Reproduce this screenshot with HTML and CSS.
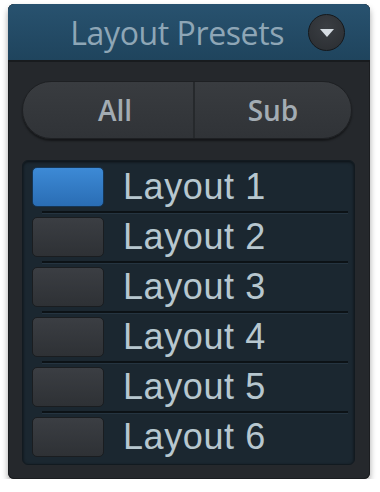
FILE: index.html
```html
<!DOCTYPE html>
<html lang="en">
    <head>
        <meta charset="UTF-8">
        <meta name="viewport" content="width=device-width, initial-scale=1.0">
        <title>Layout Presets</title>
        <link rel="stylesheet" href="styles.css">
    </head>
    <body>
        <div class="panel">
            <div class="header">
                <h1>Layout Presets</h1>
                <button class="drop">
                    <svg width="16" height="10" viewBox="0 0 16 10"><path d="M1 1 L15 1 L8 9 Z" fill="#d6dde3"/></svg>
                </button>
            </div>
            <div class="body">
                <div class="seg">
                    <div class="seg-btn">All</div>
                    <div class="seg-btn">Sub</div>
                </div>
                <ul class="list">
                    <li class="active"><span class="swatch"></span>Layout 1</li>
                    <li><span class="swatch"></span>Layout 2</li>
                    <li><span class="swatch"></span>Layout 3</li>
                    <li><span class="swatch"></span>Layout 4</li>
                    <li><span class="swatch"></span>Layout 5</li>
                    <li><span class="swatch"></span>Layout 6</li>
                </ul>
            </div>
        </div>
    </body>
</html>
```

FILE: styles.css
```css
* {
    box-sizing: border-box;
}

body {
    margin: 0;
    background: #fff;
    font-family: "Liberation Sans", Arial, sans-serif;
}

.panel {
    margin: 4px 0 0 8px;
    width: 362px;
    height: 475px;
    border-radius: 6px;
    background: #25282c;
    box-shadow: 0 4px 6px rgba(0, 0, 0, 0.35), inset 0 0 0 1px #1b1d20;
    overflow: hidden;
}

.header {
    height: 58px;
    display: flex;
    align-items: center;
    justify-content: flex-end;
    gap: 24px;
    padding-right: 25px;
    background: linear-gradient(#28526f, #1f445d);
    border-bottom: 2px solid #181b1e;
}
.header h1 {
    margin: 0;
    font-family: "Open Sans", sans-serif;
    font-weight: 400;
    font-size: 32px;
    color: #8ea6b6;
    letter-spacing: -0.4px;
}

.drop {
    width: 37px;
    height: 37px;
    border-radius: 50%;
    border: 1px solid #15181b;
    background: radial-gradient(circle at 50% 35%, #3a3e43, #2a2d31);
    display: flex;
    align-items: center;
    justify-content: center;
    padding: 0;
    padding-top: 2px;
}

.body {
    padding: 19px 15px 0 14px;
}

.seg {
    display: flex;
    height: 58px;
    width: 330px;
    border-radius: 29px;
    overflow: hidden;
    background: linear-gradient(#393c40, #303337);
    border: 1px solid #1e2023;
    box-shadow: 0 2px 2px rgba(0, 0, 0, 0.45);
}
.seg-btn {
    flex: 1;
    display: flex;
    align-items: center;
    justify-content: center;
    font-family: "Open Sans", sans-serif;
    font-weight: 600;
    font-size: 28px;
    color: #a3acb3;
}
.seg-btn + .seg-btn {
    border-left: 2px solid #26292c;
}
.seg-btn:first-child {
    padding-left: 14px;
}
.seg-btn:last-child {
    padding-left: 0;
}

.list {
    list-style: none;
    margin: 21px 0 0;
    padding: 1px 4px 2px 9px;
    width: 333px;
    background: #1b2730;
    border: 1px solid #121a20;
    border-radius: 6px;
    box-shadow: inset 0 1px 3px rgba(0, 0, 0, 0.6);
}
.list li {
    height: 50px;
    display: flex;
    align-items: center;
    gap: 19px;
    font-size: 36px;
    color: #b7c7cf;
    letter-spacing: 0.6px;
    position: relative;
}
.list li + li::before {
    content: "";
    position: absolute;
    top: -1px;
    left: 10px;
    right: 2px;
    height: 2px;
    background: #0c1216;
    border-bottom: 1px solid #253440;
}

.swatch {
    width: 72px;
    height: 40px;
    border-radius: 5px;
    background: linear-gradient(#3b3e43, #2e3135);
    border: 1px solid #1a1d20;
    flex: none;
}
.active .swatch {
    background: linear-gradient(#3d8ad6, #2a6db4);
    border-color: #163553;
}
```
